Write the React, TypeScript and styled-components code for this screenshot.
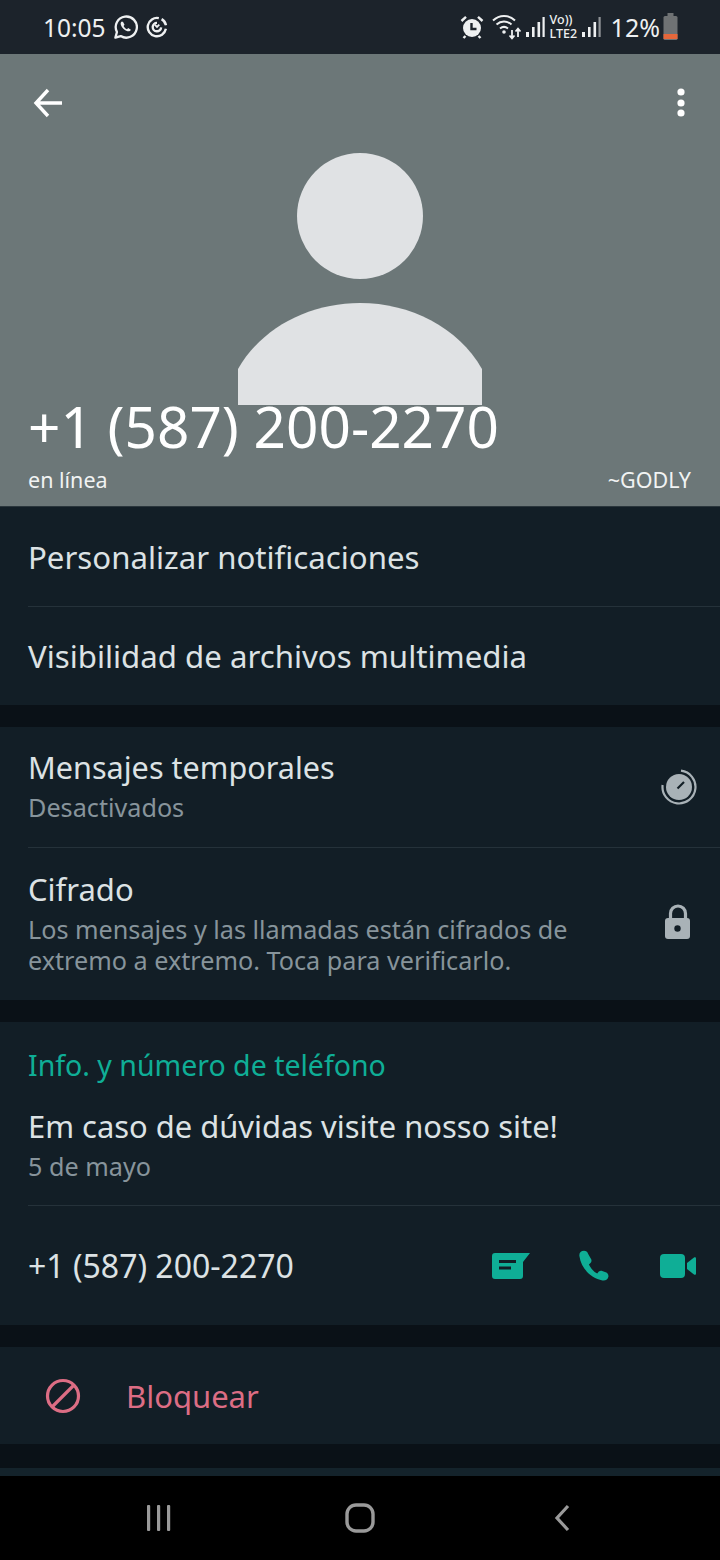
import React from 'react'
import styled, { createGlobalStyle } from 'styled-components'

const colors = {
  status: '#1c232b',
  hero: '#6c7778',
  panel: '#121e26',
  gap: '#0a1117',
  divider: '#25323a',
  text: '#dce2e4',
  muted: '#87949b',
  green: '#0fae96',
  red: '#dc6d84',
  icon: '#a9b2b7',
}

const GlobalStyle = createGlobalStyle`
  html, body {
    margin: 0;
    padding: 0;
    background: #000;
  }
  * {
    box-sizing: border-box;
  }
`

const Page = styled.div`
  width: 720px;
  height: 1560px;
  display: flex;
  flex-direction: column;
  overflow: hidden;
  background: ${colors.gap};
  font-family: 'Noto Sans', 'Open Sans', sans-serif;
  color: ${colors.text};
`

const StatusBar = styled.div`
  height: 54px;
  flex: none;
  display: flex;
  align-items: center;
  justify-content: space-between;
  padding: 0 42px 0 43px;
  background: ${colors.status};
  color: #eef0f1;
`

const StatusGroup = styled.div`
  display: flex;
  align-items: center;
`

const StatusIcon = styled.span<{ $left?: number }>`
  display: flex;
  margin-left: ${({ $left = 0 }) => $left}px;
`

const Clock = styled.span`
  font-size: 24.5px;
  margin-right: 7px;
`

const Percent = styled.span`
  font-size: 25px;
  margin: 0 3px 0 10px;
`

const Hero = styled.div`
  height: 453px;
  flex: none;
  display: flex;
  flex-direction: column;
  background: ${colors.hero};
  color: #fff;
  border-bottom: 1px solid #2a363c;
`

const HeroBar = styled.div`
  height: 99px;
  flex: none;
  display: flex;
  align-items: flex-start;
  justify-content: space-between;
  padding: 33px 34px 0 32px;
`

const Avatar = styled.svg`
  display: block;
  flex: none;
  margin: 0 auto;
`

const HeroName = styled.div`
  font-size: 56.700px;
  line-height: 44px;
  margin-top: -1px;
  padding-left: 28px;
  white-space: nowrap;
`

const HeroMeta = styled.div`
  display: flex;
  justify-content: space-between;
  padding: 0 29px 0 28px;
  margin-top: 18px;
  font-size: 21.500px;
  line-height: 28px;
  color: #f1f3f3;
`

const Section = styled.div<{ $height: number }>`
  height: ${({ $height }) => $height}px;
  flex: none;
  background: ${colors.panel};
  padding-left: 28px;
  margin-bottom: 22px;
`

const SimpleRow = styled.div<{ $height: number; $size?: number; $divider?: boolean }>`
  height: ${({ $height }) => $height}px;
  display: flex;
  align-items: center;
  justify-content: space-between;
  padding-right: 24px;
  font-size: ${({ $size = 31.200 }) => $size}px;
  border-bottom: ${({ $divider }) => ($divider ? `1px solid ${colors.divider}` : 'none')};
`

const DetailRow = styled.div<{ $height: number; $top: number; $divider?: boolean }>`
  height: ${({ $height }) => $height}px;
  display: flex;
  justify-content: space-between;
  padding: ${({ $top }) => $top}px 0 0 0;
  border-bottom: ${({ $divider }) => ($divider ? `1px solid ${colors.divider}` : 'none')};
`

const RowTitle = styled.div<{ $size?: number }>`
  font-size: ${({ $size = 31 }) => $size}px;
  line-height: 45px;
`

const RowSub = styled.div`
  margin-top: 2px;
  font-size: 25.200px;
  line-height: 31px;
  color: ${colors.muted};
`

const RowIcon = styled.div<{ $top: number; $right: number }>`
  padding: ${({ $top }) => $top}px ${({ $right }) => $right}px 0 0;
`

const SectionHeading = styled.div`
  padding-top: 22px;
  height: 82px;
  font-size: 28.500px;
  line-height: 42px;
  color: ${colors.green};
`

const ActionIcons = styled.div`
  display: flex;
  align-items: center;
  gap: 48px;

  > :last-child {
    margin-left: 2px;
  }
`

const BlockRow = styled.div`
  height: 97px;
  display: flex;
  align-items: center;
  gap: 45px;
  padding-left: 17px;
  font-size: 31px;
  color: ${colors.red};
`

const Sliver = styled.div`
  height: 8px;
  flex: none;
  margin-top: 2px;
  background: #14232b;
`

const NavBar = styled.div`
  flex: 1;
  display: flex;
  align-items: center;
  justify-content: space-between;
  padding: 0 149px 0 145px;
  background: #000;
  color: #9a9a9a;
`

const VoLte = styled.div`
  width: 27px;
  margin: 0 5px 0 5px;
  font-size: 12.500px;
  line-height: 14px;
  font-weight: 500;
  text-align: left;
  white-space: nowrap;
`

const WhatsappGlyph = () => (
  <svg width="25" height="26" viewBox="0 0 26 26" fill="none" stroke="currentColor" strokeWidth="2.4">
    <path d="M2.5 24l1.6-5.8A11 11 0 1 1 8 22.4z" strokeLinejoin="round" />
    <path
      d="M9.3 7.2c-1.2.6-1.6 2-1.1 3.6 1 2.8 3.6 5.6 6.8 6.6 1.6.4 3-.2 3.6-1.5l-2.8-1.8-1.3 1.2c-1.4-.6-2.8-2-3.5-3.4l1-1.3-1.5-2.9z"
      fill="currentColor"
      stroke="none"
    />
  </svg>
)

const SyncGlyph = () => (
  <svg width="22" height="22" viewBox="0 0 24 24" fill="none" stroke="currentColor" strokeWidth="2.6">
    <path d="M14 2.300A10 10 0 1 0 21.700 14" />
    <path d="M21.800 10A10 10 0 0 0 17 3.400" />
    <path d="M12 7.500a4.600 4.600 0 1 0 4.500 5" />
    <path d="M9.500 9.500l2.500 2.500 2.500-2.500" strokeWidth="2" />
  </svg>
)

const AlarmGlyph = () => (
  <svg width="24" height="24" viewBox="0 0 24 24">
    <circle cx="12" cy="13" r="9" fill="currentColor" />
    <path d="M1.500 6L6 1.800M22.500 6L18 1.800M5.500 21l-2 2M18.500 21l2 2" stroke="currentColor" strokeWidth="2.400" />
    <path d="M11.500 8v6h5" fill="none" stroke={colors.status} strokeWidth="2.400" />
  </svg>
)

const WifiGlyph = () => (
  <svg width="30" height="28" viewBox="0 0 30 28" fill="none" stroke="currentColor" strokeWidth="2">
    <path d="M1 7.500c6.500-6 15.500-6 22 0" />
    <path d="M4.500 11.500c4.500-4 10.500-4 15 0" />
    <path d="M8 15.500c2.500-2 5.500-2 8 0" />
    <circle cx="12" cy="19" r="1.800" fill="currentColor" stroke="none" />
    <path d="M20 17v8M17.500 22.500l2.500 2.800 2.500-2.800" strokeWidth="1.800" />
    <path d="M26 24v-8M23.500 18.500l2.500-2.800 2.500 2.800" strokeWidth="1.800" />
  </svg>
)

const SignalGlyph = ({ lastOpacity = 1 }: { lastOpacity?: number }) => (
  <svg width="19" height="22" viewBox="0 0 19 22" fill="currentColor">
    <rect x="0" y="16" width="3" height="5" />
    <rect x="6" y="11" width="2.600" height="10" />
    <rect x="11.500" y="6" width="2.600" height="15" />
    <rect x="16.500" y="1" width="2.200" height="20" opacity={lastOpacity} />
  </svg>
)

const BatteryGlyph = () => (
  <svg width="15" height="28" viewBox="0 0 15 28">
    <rect x="4.500" y="0" width="6" height="3" fill="#6f7274" />
    <rect x="0.500" y="3" width="14" height="24" rx="1.500" fill="#6f7274" />
    <rect x="0.500" y="21" width="14" height="5" fill="#e5673b" />
  </svg>
)

const BackGlyph = () => (
  <svg width="32" height="32" viewBox="0 0 32 32" fill="none" stroke="currentColor" strokeWidth="3.400">
    <path d="M30 16H5M16 3L4 16l12 13" />
  </svg>
)

const MoreGlyph = () => (
  <svg width="10" height="32" viewBox="0 0 10 32" fill="currentColor">
    <circle cx="5" cy="5" r="3.600" />
    <circle cx="5" cy="16" r="3.600" />
    <circle cx="5" cy="26" r="3.600" />
  </svg>
)

const AvatarShape = () => (
  <Avatar width="244" height="252" viewBox="0 0 244 252" fill="#e0e2e4">
    <circle cx="122" cy="63" r="63" />
    <path d="M0 216C24 174 72 150 122 150s98 24 122 66v36H0z" />
  </Avatar>
)

const TimerGlyph = () => (
  <svg width="36" height="36" viewBox="0 0 36 36">
    <circle cx="18" cy="18" r="13" fill={colors.icon} />
    <path d="M20 1.600A16.500 16.500 0 1 1 1.600 16" fill="none" stroke={colors.icon} strokeWidth="2.200" />
    <path d="M16.500 19.500L23 13" stroke={colors.panel} strokeWidth="2.200" />
  </svg>
)

const LockGlyph = () => (
  <svg width="28" height="36" viewBox="0 0 28 36">
    <path d="M6.500 15V9.500a7.500 7.500 0 0 1 15 0V15" fill="none" stroke={colors.icon} strokeWidth="3.200" />
    <rect x="1" y="14" width="25" height="21" rx="3" fill={colors.icon} />
    <circle cx="13.500" cy="24.500" r="3.200" fill={colors.panel} />
  </svg>
)

const MessageGlyph = () => (
  <svg width="38" height="26" viewBox="0 0 38 26">
    <path d="M3 0h35l-7 9v14a3 3 0 0 1-3 3H3a3 3 0 0 1-3-3V3a3 3 0 0 1 3-3z" fill={colors.green} />
    <path d="M7 8.500h17M7 15h12" stroke={colors.panel} strokeWidth="3" />
  </svg>
)

const PhoneGlyph = () => (
  <svg width="32" height="32" viewBox="0 0 32 32">
    <path
      d="M6 .8C2.800.8 1 3 1.400 6c1.600 12 11 22 23 24.400 3 .5 5.600-.8 6-3.600.3-2-.8-3.800-2.700-4.500l-3.500-1.300c-1.500-.5-3 0-4 1.300l-1 1.300c-3.800-2-6.500-5.300-8.300-9l1.600-1.500c1-1 1.200-2.300.8-3.500L10.200 4C9.500 2 8 .8 6 .8z"
      fill={colors.green}
    />
  </svg>
)

const VideoGlyph = () => (
  <svg width="36" height="24" viewBox="0 0 36 24" fill={colors.green}>
    <rect x="0" y="0" width="25" height="24" rx="4" />
    <path d="M27 9l7-5.500c1-.6 2-.2 2 1v15c0 1.200-1 1.600-2 1L27 15z" />
  </svg>
)

const BlockGlyph = () => (
  <svg width="36" height="36" viewBox="0 0 36 36" fill="none" stroke={colors.red} strokeWidth="3.200">
    <circle cx="18" cy="18" r="15.500" />
    <path d="M7 29L29 7" />
  </svg>
)

const RecentsGlyph = () => (
  <svg width="28" height="28" viewBox="0 0 28 28" fill="currentColor">
    <rect x="2" y="1" width="3.200" height="26" rx="1" />
    <rect x="12" y="1" width="3.200" height="26" rx="1" />
    <rect x="22" y="1" width="3.200" height="26" rx="1" />
  </svg>
)

const HomeGlyph = () => (
  <svg width="30" height="30" viewBox="0 0 30 30" fill="none" stroke="currentColor" strokeWidth="3.400">
    <rect x="2" y="2" width="26" height="26" rx="9" />
  </svg>
)

const BackNavGlyph = () => (
  <svg width="24" height="28" viewBox="-6 0 24 28" fill="none" stroke="currentColor" strokeWidth="3.200">
    <path d="M15 2L4 14l11 12" />
  </svg>
)

const App: React.FC = () => {
  return (
    <Page>
      <GlobalStyle />
      <StatusBar>
        <StatusGroup>
          <Clock>10:05</Clock>
          <WhatsappGlyph />
          <StatusIcon $left={8}>
            <SyncGlyph />
          </StatusIcon>
        </StatusGroup>
        <StatusGroup>
          <AlarmGlyph />
          <StatusIcon $left={8}>
            <WifiGlyph />
          </StatusIcon>
          <StatusIcon $left={4}>
            <SignalGlyph />
          </StatusIcon>
          <VoLte>
            Vo))
            <br />
            LTE2
          </VoLte>
          <SignalGlyph lastOpacity={0.55} />
          <Percent>12%</Percent>
          <BatteryGlyph />
        </StatusGroup>
      </StatusBar>
      <Hero>
        <HeroBar>
          <BackGlyph />
          <MoreGlyph />
        </HeroBar>
        <AvatarShape />
        <HeroName>+1 (587) 200-2270</HeroName>
        <HeroMeta>
          <span>en línea</span>
          <span>~GODLY</span>
        </HeroMeta>
      </Hero>
      <Section $height={198}>
        <SimpleRow $height={100} $divider>
          Personalizar notificaciones
        </SimpleRow>
        <SimpleRow $height={98}>Visibilidad de archivos multimedia</SimpleRow>
      </Section>
      <Section $height={273}>
        <DetailRow $height={121} $top={18} $divider>
          <div>
            <RowTitle $size={30.600}>Mensajes temporales</RowTitle>
            <RowSub>Desactivados</RowSub>
          </div>
          <RowIcon $top={24} $right={23}>
            <TimerGlyph />
          </RowIcon>
        </DetailRow>
        <DetailRow $height={152} $top={19}>
          <div>
            <RowTitle>Cifrado</RowTitle>
            <RowSub>
              Los mensajes y las llamadas están cifrados de
              <br />
              extremo a extremo. Toca para verificarlo.
            </RowSub>
          </div>
          <RowIcon $top={37} $right={28}>
            <LockGlyph />
          </RowIcon>
        </DetailRow>
      </Section>
      <Section $height={303}>
        <SectionHeading>Info. y número de teléfono</SectionHeading>
        <DetailRow $height={102} $top={0} $divider>
          <div>
            <RowTitle $size={30.900}>Em caso de dúvidas visite nosso site!</RowTitle>
            <RowSub>5 de mayo</RowSub>
          </div>
        </DetailRow>
        <SimpleRow $height={119} $size={32}>
          +1 (587) 200-2270
          <ActionIcons>
            <MessageGlyph />
            <PhoneGlyph />
            <VideoGlyph />
          </ActionIcons>
        </SimpleRow>
      </Section>
      <Section $height={97}>
        <BlockRow>
          <BlockGlyph />
          Bloquear
        </BlockRow>
      </Section>
      <Sliver />
      <NavBar>
        <RecentsGlyph />
        <HomeGlyph />
        <BackNavGlyph />
      </NavBar>
    </Page>
  )
}

export default App
